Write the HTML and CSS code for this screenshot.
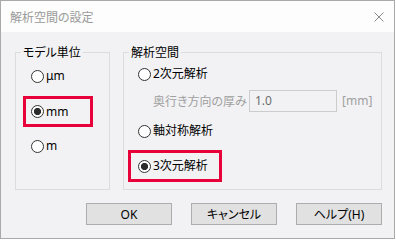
FILE: index.html
```html
<!DOCTYPE html>
<html lang="ja">
<head>
<meta charset="utf-8">
<title>解析空間の設定</title>
<link rel="stylesheet" href="styles.css">
</head>
<body>
<div class="window">
  <div class="titlebar">
    <span class="title">解析空間の設定</span>
    <svg class="close" width="10" height="10" viewBox="0 0 10 10"><path d="M0.5 0.5 L9.5 9.5 M9.5 0.5 L0.5 9.5" stroke="#8a8a8a" stroke-width="1" fill="none"/></svg>
  </div>
  <div class="content">
    <div class="groups">
      <fieldset class="group g-unit">
        <legend>モデル単位</legend>
        <div class="opt u1"><span class="radio"></span><span class="lbl">μm</span></div>
        <div class="hl hl-unit"><div class="opt"><span class="radio on"></span><span class="lbl">mm</span></div></div>
        <div class="opt u3"><span class="radio"></span><span class="lbl">m</span></div>
      </fieldset>
      <fieldset class="group g-space">
        <legend>解析空間</legend>
        <div class="opt s1"><span class="radio"></span><span class="lbl">2次元解析</span></div>
        <div class="depth">
          <span class="dlabel">奥行き方向の厚み</span>
          <span class="input">1.0</span>
          <span class="unit">[mm]</span>
        </div>
        <div class="opt s2"><span class="radio"></span><span class="lbl">軸対称解析</span></div>
        <div class="hl hl-space"><div class="opt"><span class="radio on"></span><span class="lbl">3次元解析</span></div></div>
      </fieldset>
    </div>
    <div class="buttons">
      <button class="btn">OK</button>
      <button class="btn">キャンセル</button>
      <button class="btn">ヘルプ(H)</button>
    </div>
  </div>
</div>
</body>
</html>
```
FILE: styles.css
```css
* { box-sizing: border-box; }
html, body {
  margin: 0;
  padding: 0;
  background: #ffffff;
}
body {
  font-family: "Noto Sans", "Noto Sans CJK JP", sans-serif;
  font-size: 12px;
  line-height: 16px;
  color: #000;
  font-feature-settings: "palt";
}
.window {
  width: 395px;
  height: 239px;
  border: 1px solid #a9a9a9;
  background: #f2f2f4;
  display: flex;
  flex-direction: column;
}
.titlebar {
  height: 31px;
  background: #fcfdfc;
  display: flex;
  align-items: center;
  justify-content: space-between;
  padding: 0 10px 0 9px;
}
.title {
  color: #9a9a9a;
  font-family: "Noto Sans CJK JP", sans-serif;
}
.close { display: block; }
.content {
  padding: 12px 12px 0 14px;
  display: flex;
  flex-direction: column;
}
.groups {
  display: flex;
  gap: 13px;
  height: 146px;
}
.group {
  margin: 0;
  padding: 0 0 0 5px;
  border: 1px solid #dcdcdc;
  min-width: 0;
  display: flex;
  flex-direction: column;
  align-items: flex-start;
}
.group legend {
  padding: 0 2px;
  line-height: 16px;
  font-family: "Noto Sans CJK JP", sans-serif;
}
.g-unit { width: 95px; }
.g-space { width: 259px; }
.opt {
  height: 20px;
  display: flex;
  align-items: center;
}
.radio {
  width: 13px;
  height: 13px;
  border: 1px solid #333;
  border-radius: 50%;
  background: #fff;
  flex: none;
}
.radio.on {
  background: radial-gradient(circle, #2b2b2b 0 3.3px, #fff 3.9px);
}
.lbl { margin-left: 2px; }
.hl {
  border: 3px solid #e8003a;
  display: flex;
  align-items: center;
}
.u1 { margin: 6px 0 0 10px; }
.hl-unit { margin: 10px 0 0 2px; width: 70px; height: 31px; padding-left: 5px; }
.u3 { margin: 9px 0 0 10px; }
.s1 { margin: 4px 0 0 9px; }
.depth {
  margin: 6px 0 0 24px;
  height: 22px;
  display: flex;
  align-items: center;
  color: #a0a0a0;
}
.dlabel { width: 96px; font-family: "Noto Sans CJK JP", sans-serif; }
.input {
  width: 88px;
  height: 22px;
  border: 1px solid #cccccc;
  background: #f2f2f4;
  color: #6d6d6d;
  padding-left: 5px;
  display: flex;
  align-items: center;
}
.unit { margin-left: 5px; }
.s2 { margin: 9px 0 0 9px; }
.hl-space { margin: 9px 0 0 -1px; width: 94px; height: 32px; padding-left: 7px; }
.buttons {
  margin-top: 13px;
  display: flex;
  justify-content: flex-end;
  gap: 19px;
}
.btn {
  width: 86px;
  height: 22px;
  margin: 0;
  padding: 0;
  border: 1px solid #adadad;
  background: #e1e1e1;
  font-family: "Noto Sans", "Noto Sans CJK JP", sans-serif;
  font-size: 12px;
  font-feature-settings: "palt";
  color: #000;
}
```
